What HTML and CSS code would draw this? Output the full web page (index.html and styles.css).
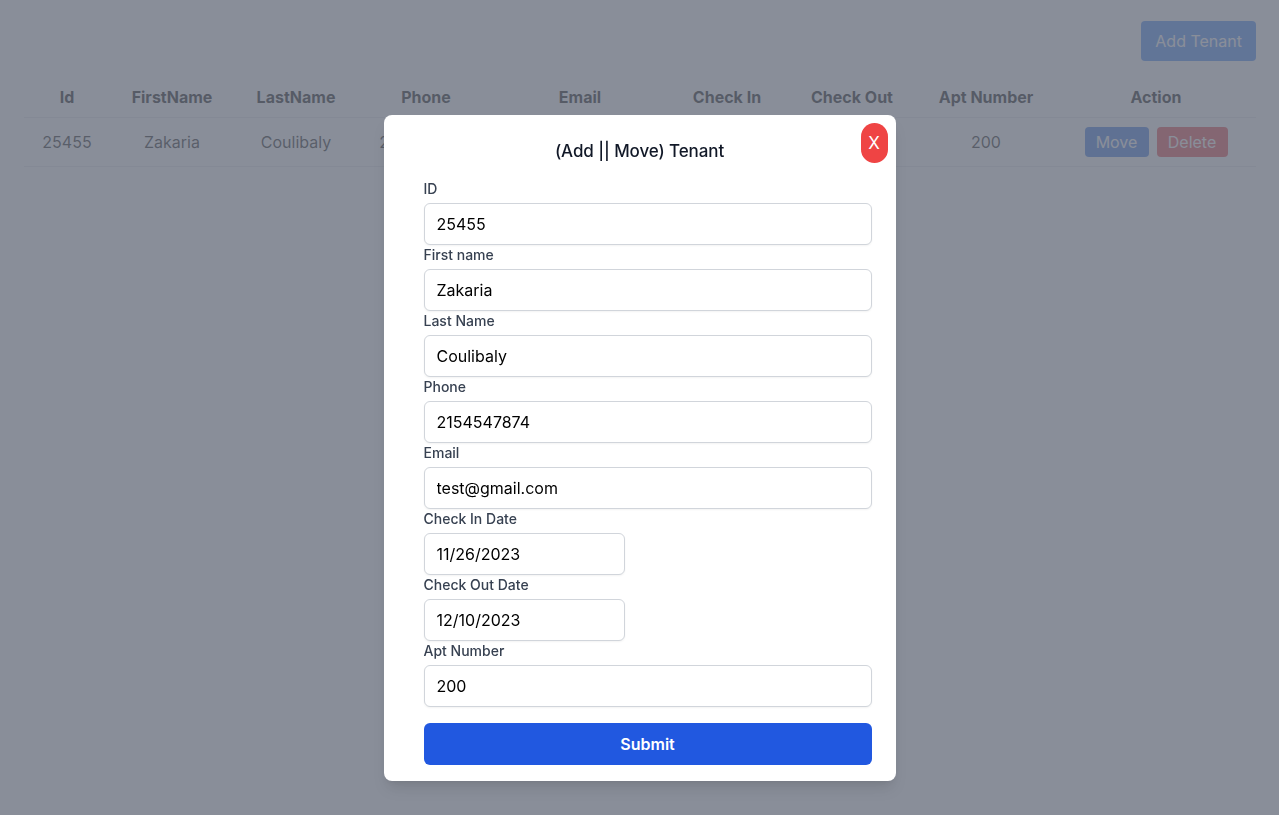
FILE: index.html
```html
<!DOCTYPE html>
<html>
<head>
<meta charset="utf-8">
<link rel="stylesheet" href="styles.css">
</head>
<body>
<div class="page">
  <div class="toolbar">
    <button class="btn btn-add">Add Tenant</button>
  </div>
  <table class="tenants">
    <colgroup>
      <col style="width:86px"><col style="width:124px"><col style="width:124px"><col style="width:136px"><col style="width:172px"><col style="width:122px"><col style="width:128px"><col style="width:140px"><col style="width:200px">
    </colgroup>
    <thead>
      <tr><th>Id</th><th>FirstName</th><th>LastName</th><th>Phone</th><th>Email</th><th>Check In</th><th>Check Out</th><th>Apt Number</th><th>Action</th></tr>
    </thead>
    <tbody>
      <tr>
        <td>25455</td><td>Zakaria</td><td>Coulibaly</td><td>2154547874</td><td>test@gmail.com</td><td>11/26/2023</td><td>12/10/2023</td><td>200</td>
        <td><div class="actions"><button class="btn btn-move">Move</button><button class="btn btn-delete">Delete</button></div></td>
      </tr>
    </tbody>
  </table>
</div>

<div class="overlay">
  <div class="modal">
    <button class="close">X</button>
    <h2 class="modal-title">(Add || Move) Tenant</h2>
    <form class="form">
      <label class="label">ID</label>
      <input class="input" type="text" value="25455">
      <label class="label">First name</label>
      <input class="input" type="text" value="Zakaria">
      <label class="label">Last Name</label>
      <input class="input" type="text" value="Coulibaly">
      <label class="label">Phone</label>
      <input class="input" type="text" value="2154547874">
      <label class="label">Email</label>
      <input class="input" type="text" value="test@gmail.com">
      <label class="label">Check In Date</label>
      <input class="input input-date" type="text" value="11/26/2023">
      <label class="label">Check Out Date</label>
      <input class="input input-date" type="text" value="12/10/2023">
      <label class="label">Apt Number</label>
      <input class="input" type="text" value="200">
      <button class="submit" type="button">Submit</button>
    </form>
  </div>
</div>
</body>
</html>
```

FILE: styles.css
```css
* { box-sizing: border-box; }
html, body { margin: 0; padding: 0; }
body {
  font-family: Inter, "Noto Sans", "Liberation Sans", sans-serif;
  font-size: 16px;
  line-height: 24px;
  color: #111827;
  background: #ffffff;
  width: 1279px;
  height: 815px;
  overflow: hidden;
}
.page {
  padding: 21px 23px 0 24px;
}
.toolbar {
  display: flex;
  justify-content: flex-end;
}
.btn {
  font-family: inherit;
  font-size: 16px;
  line-height: 24px;
  border: none;
  color: #ffffff;
  border-radius: 4px;
  cursor: pointer;
  white-space: nowrap;
}
.btn-add {
  background: #3b82f6;
  padding: 8px 14px;
  min-width: 114px;
}
.tenants {
  width: 1232px;
  margin-top: 16px;
  border-collapse: collapse;
  table-layout: fixed;
}
.tenants th {
  font-weight: 700;
  color: #000000;
  padding: 8px 0;
  text-align: center;
  border-bottom: 1px solid #e5e7eb;
  white-space: nowrap;
}
.tenants td {
  color: #111111;
  padding: 12px 0;
  text-align: center;
  border-bottom: 1px solid #e5e7eb;
  white-space: nowrap;
}
.tenants td:last-child { padding: 9px 0; }
.actions {
  display: flex;
  justify-content: center;
  gap: 8px;
}
.btn-move {
  background: #2f6fe0;
  padding: 3px 10px;
  min-width: 64px;
}
.btn-delete {
  background: #e5393f;
  padding: 3px 10px;
  min-width: 71px;
}
.overlay {
  position: fixed;
  inset: 0;
  background: rgba(107, 114, 128, 0.8);
  display: flex;
  justify-content: center;
  align-items: flex-start;
  padding-top: 115px;
}
.modal {
  position: relative;
  width: 512px;
  background: #ffffff;
  border-radius: 8px;
  box-shadow: 0 10px 15px -3px rgba(0,0,0,0.1), 0 4px 6px -4px rgba(0,0,0,0.1);
  padding: 24px 40px 16px;
}
.close {
  position: absolute;
  top: 8px;
  right: 8px;
  width: 27px;
  height: 40px;
  border-radius: 14px;
  border: none;
  background: #ef4444;
  color: #ffffff;
  font-family: inherit;
  font-size: 17px;
  line-height: 40px;
  padding: 0;
}
.modal-title {
  margin: 0 0 16px;
  text-align: center;
  font-size: 17px;
  line-height: 24px;
  font-weight: 500;
  color: #111827;
  letter-spacing: -0.1px;
}
.form {
  display: flex;
  flex-direction: column;
  align-items: flex-start;
}
.label {
  font-size: 14px;
  line-height: 20px;
  font-weight: 500;
  color: #374151;
  margin-bottom: 4px;
}
.input {
  width: 448px;
  height: 42px;
  border: 1px solid #d1d5db;
  border-radius: 6px;
  padding: 0 12px;
  font-family: inherit;
  font-size: 16px;
  color: #000000;
  background: #ffffff;
  box-shadow: 0 1px 2px rgba(0,0,0,0.05);
  outline: none;
}
.input-date { width: 201px; }
.submit {
  margin-top: 16px;
  width: 448px;
  height: 42px;
  border: none;
  border-radius: 6px;
  background: #2158e0;
  color: #ffffff;
  font-family: inherit;
  font-size: 16px;
  font-weight: 600;
}
```
